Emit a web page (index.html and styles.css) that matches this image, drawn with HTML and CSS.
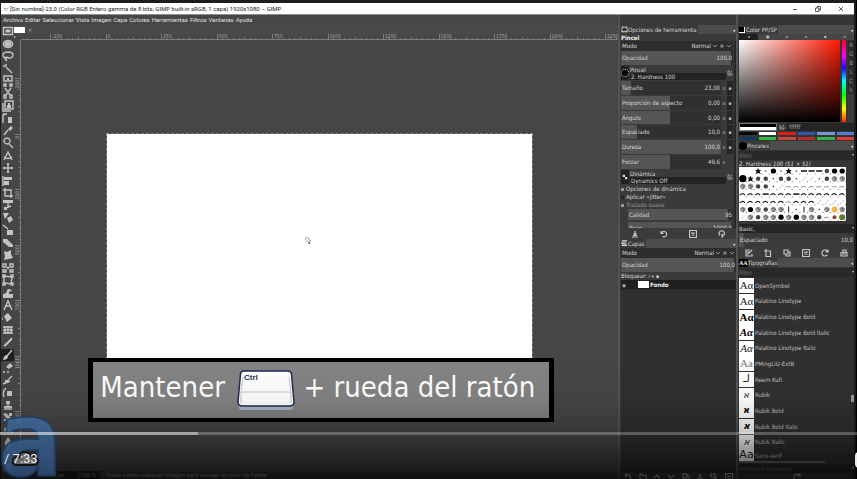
FILE: index.html
```html
<!DOCTYPE html>
<html lang="es">
<head>
<meta charset="utf-8">
<title>[Sin nombre]-23.0 – GIMP</title>
<link rel="stylesheet" href="styles.css">
</head>
<body>
<div class="player">
  <div class="app">
    <header class="titlebar">
      <svg class="wilber" viewBox="0 0 8 6"><path d="M1 1l1 2 2-1 2 1 1-2M2 3l1 2h2l1-1" fill="none" stroke="#999"/></svg>
      <h1>[Sin nombre]-23.0 (Color RGB Entero gamma de 8 bits, GIMP built-in sRGB, 1 capa) 1920x1080 – GIMP</h1>
      <div class="window-buttons">
        <button aria-label="Minimizar"><svg viewBox="0 0 6 6"><path d="M1 3.500h4"/></svg></button>
        <button aria-label="Restaurar"><svg viewBox="0 0 6 6"><path d="M.5 2h3.500v3.500h-3.500zM2 2v-1.500h3.500v3.500h-2"/></svg></button>
        <button aria-label="Cerrar"><svg viewBox="0 0 6 6"><path d="M1 1l4 4M5 1l-4 4"/></svg></button>
      </div>
    </header>
    <div class="work">
      <div class="image-window">
        <nav class="menubar">
          <a href="#">Archivo</a><a href="#">Editar</a><a href="#">Seleccionar</a><a href="#">Vista</a><a href="#">Imagen</a><a href="#">Capa</a><a href="#">Colores</a><a href="#">Herramientas</a><a href="#">Filtros</a><a href="#">Ventanas</a><a href="#">Ayuda</a>
        </nav>
        <div class="editor">
          <div class="toolbox" id="toolbox"></div>
          <div class="document">
            <div class="image-tabs"><span class="thumb"></span><button aria-label="Cerrar imagen">×</button></div>
            <div class="corner">▸</div>
            <svg class="ruler-x" id="ruler-x"></svg>
            <svg class="ruler-y" id="ruler-y"></svg>
            <div class="viewport">
              <div class="canvas">
                <svg class="cursor" viewBox="0 0 8 8"><path d="M1 3h1M3 1v1M3 4.500v1M4.500 3h1M5 5.500v2M4.500 7h2M6 4v1" stroke="#444" fill="none"/></svg>
              </div>
            </div>
            <div class="status">
              <select aria-label="Unidad"><option>px</option></select>
              <select aria-label="Ampliación"><option>100 %</option></select>
              <span>⁄ Pulse sobre cualquier imagen para recoger el color de frente</span>
            </div>
          </div>
        </div>
      </div>

      <aside class="dock dock-options">
        <div class="tabbar"><span class="tab"><svg viewBox="0 0 8 8"><path d="M1 1.500h6v5h-6zM0 6.500h8M2 0v2M6 0v2" fill="none" stroke="#c4c4c4"/></svg>Opciones de herramienta</span><button aria-label="Menú">◂</button></div>
        <h2>Pincel</h2>
        <div class="options">
          <div class="mode"><label for="m1">Modo</label><select id="m1"><option>Normal</option></select><svg class="chev" viewBox="0 0 6 6"><path d="M1 2l2 2 2-2"/></svg><svg class="chev" viewBox="0 0 6 6"><path d="M2 4.500V2h2v2H2"/></svg><svg class="chev" viewBox="0 0 6 6"><path d="M1 2l2 2 2-2"/></svg></div>
          <label class="slider tall" style="--fill:98%"><span>Opacidad</span><input value="100,0"></label>
          <div class="pick"><span class="chip dot"></span><label>Pincel<input value="2. Hardness 100"></label><button aria-label="Editar pincel"><svg viewBox="0 0 6 6"><path d="M1 1v4h4V3M2 4l3-3M1 1h2"/></svg></button></div>
          <div class="sliders">
            <div class="row"><label class="slider" style="--fill:10%"><span>Tamaño</span><input value="23,00"></label><button>o</button><button class="on">▪</button></div>
            <div class="row"><label class="slider" style="--fill:49%"><span>Proporción de aspecto</span><input value="0,00"></label><button>o</button><button class="on">▪</button></div>
            <div class="row"><label class="slider" style="--fill:49%"><span>Ángulo</span><input value="0,00"></label><button>o</button><button class="on">▪</button></div>
            <div class="row"><label class="slider" style="--fill:16%"><span>Espaciado</span><input value="10,0"></label><button>o</button><button class="on">▪</button></div>
            <div class="row"><label class="slider" style="--fill:100%"><span>Dureza</span><input value="100,0"></label><button>o</button><button class="on">▪</button></div>
            <div class="row"><label class="slider" style="--fill:49%"><span>Forzar</span><input value="49,6"></label><button>o</button><button></button></div>
          </div>
          <div class="pick"><span class="chip"><svg class="dyn" viewBox="0 0 8 8"><path d="M1 1h3v3H1zM4 4h3v3H4z"/></svg></span><label>Dinámica<input value="Dynamics Off"></label><button aria-label="Editar dinámica"><svg viewBox="0 0 6 6"><path d="M1 1v4h4V3M2 4l3-3M1 1h2"/></svg></button></div>
          <label class="check"><input type="checkbox" checked>Opciones de dinámica</label>
          <label class="check"><input type="checkbox">Aplicar «jitter»</label>
          <label class="check dim"><input type="checkbox" checked>Trazado suave</label>
          <div class="indent">
            <label class="slider" style="--fill:95%"><span>Calidad</span><input value="95"></label>
            <label class="slider cut" style="--fill:98%"><span>Peso</span><input value="1000,0"></label>
          </div>
        </div>
        <div class="actions">
          <button aria-label="Guardar"><svg viewBox="0 0 8 8"><path d="M1 7h6M4 1v4M2.500 3.500L4 5l1.500-1.500M2 5.500h4"/></svg></button>
          <button aria-label="Restaurar"><svg viewBox="0 0 8 8"><path d="M1 1v2.500h2.500M1.500 3a2.700 2.700 0 1 1 1 3.500"/></svg></button>
          <button aria-label="Borrar"><svg viewBox="0 0 8 8"><path d="M.5.500h7v7h-7zM2.500 2.500l3 3M5.500 2.500l-3 3"/></svg></button>
          <button aria-label="Reiniciar"><svg viewBox="0 0 8 8"><path d="M2 5.500a2.700 2.700 0 1 1 3.500 0M3.500 7.500L5 5.700 3.500 4"/></svg></button>
        </div>
        <div class="tabbar"><span class="tab"><svg viewBox="0 0 8 8"><path d="M1 1h6M0 3.500h6M1 6h6" stroke="#ddd" stroke-width="1.500"/></svg>Capas</span><button aria-label="Menú">◂</button></div>
        <div class="mode"><label for="m2">Modo</label><select id="m2"><option>Normal</option></select><svg class="chev" viewBox="0 0 6 6"><path d="M1 2l2 2 2-2"/></svg><svg class="chev" viewBox="0 0 6 6"><path d="M2 4.500V2h2v2H2"/></svg><svg class="chev" viewBox="0 0 6 6"><path d="M1 2l2 2 2-2"/></svg></div>
        <label class="slider tall" style="--fill:98%"><span>Opacidad</span><input value="100,0"></label>
        <div class="lock">Bloquear: <i>⁄ + ▪</i></div>
        <div class="layers"><div class="layer"><i>◉</i><span class="thumb"></span><b>Fondo</b></div></div>
        <div class="actions bottom">
          <button aria-label="Nueva"><svg viewBox="0 0 8 8"><path d="M1 2h5v6M2 0v4"/></svg></button>
          <button aria-label="Grupo"><svg viewBox="0 0 8 8"><path d="M1 7V1h2l1 1.500h3V7z"/></svg></button>
          <button aria-label="Subir"><svg viewBox="0 0 8 8"><path d="M1 5l3-3 3 3"/></svg></button>
          <button aria-label="Bajar"><svg viewBox="0 0 8 8"><path d="M1 2l3 3 3-3"/></svg></button>
          <button aria-label="Duplicar"><svg viewBox="0 0 8 8"><path d="M1 1h4v4H1zM3 5v2h4V3H5"/></svg></button>
          <button aria-label="Anclar"><svg viewBox="0 0 8 8"><path d="M4 1v6M2 3h4M1.500 5L4 7l2.500-2"/></svg></button>
          <button aria-label="Máscara"><svg viewBox="0 0 8 8"><path d="M1 1h4v3H1zM3 6h4M6 3v5"/></svg></button>
          <button aria-label="Borrar capa"><svg viewBox="0 0 8 8"><path d="M.5.500h7v7h-7zM2.500 2.500l3 3M5.500 2.500l-3 3"/></svg></button>
        </div>
      </aside>

      <aside class="dock dock-color">
        <div class="tabbar"><span class="tab"><span class="fgbg"></span>Color PP/SP</span><button aria-label="Menú">◂</button></div>
        <div class="modes"><button class="on">◂</button><button>▣</button><button>o</button><button>o</button><button>▪</button><button>▫</button></div>
        <div class="picker">
          <div class="field"></div><div class="hue"></div>
          <div class="channels"><button>R</button><button>G</button><button>B</button><button>L</button><button>C</button><button>h</button></div>
        </div>
        <div class="hexrow"><span class="current"></span><svg viewBox="0 0 6 6"><path d="M1 1v4h4V3M2 4l3-3"/></svg><input aria-label="HTML" value="ffffff"></div>
        <div class="palette">
          <i class="p1"></i><i class="p2"></i><i class="p3"></i><i class="p4"></i><i class="p5"></i><i class="p6"></i>
          <i class="p7"></i><i class="p8"></i><i class="p9"></i><i class="p10"></i><i class="p8"></i><i class="p11"></i>
        </div>
        <div class="tabbar"><span class="tab"><span class="ball"></span>Pinceles</span><button aria-label="Menú">◂</button></div>
        <div class="filter"><input aria-label="Filtro de pinceles" placeholder="filtro"><i>▾</i></div>
        <p class="brush-name">2. Hardness 100 (51 × 51)</p>
        <div class="brushes"><svg id="brushes" viewBox="0 0 105 54" preserveAspectRatio="none"></svg></div>
        <div class="basic"><input aria-label="Etiquetas de pincel" value="Basic,"><i>▾</i></div>
        <label class="slider spacing" style="--fill:4%"><span>Espaciado</span><input value="10,0"></label>
        <div class="actions six">
          <button aria-label="Editar"><svg viewBox="0 0 8 8"><path d="M5 1H1v6h6V5M3 5l4-4M2 3h2M2 5h1"/></svg></button>
          <button aria-label="Nuevo"><svg viewBox="0 0 8 8"><path d="M2 2h4.500v5.500H2zM0 2h3M2 0v3"/></svg></button>
          <button aria-label="Duplicar"><svg viewBox="0 0 8 8"><path d="M1 1h4v4H1zM3 5v2h4V3H5"/></svg></button>
          <button aria-label="Borrar"><svg viewBox="0 0 8 8"><path d="M.5.500h7v7h-7zM2.500 2.500l3 3M5.500 2.500l-3 3"/></svg></button>
          <button aria-label="Recargar"><svg viewBox="0 0 8 8"><path d="M6.500 5.500a3 3 0 1 1 0-3M7 .5V3H4.500"/></svg></button>
          <button aria-label="Abrir"><svg viewBox="0 0 8 8"><path d="M1 3.500h6V7H1zM2 5h4M3 3V1h3v2"/></svg></button>
        </div>
        <div class="tabbar"><span class="tab"><span class="aa">AA</span>Tipografías</span><button aria-label="Menú">◂</button></div>
        <div class="filter"><input aria-label="Filtro de tipografías" placeholder="filtro"><i>▾</i></div>
        <div class="fonts">
          <ul>
            <li><b class="serif">Aα</b>OpenSymbol</li>
            <li><b class="serif">Aα</b>Palatino Linotype</li>
            <li><b class="serif bold">Aα</b>Palatino Linotype Bold</li>
            <li><b class="serif bold it">Aα</b>Palatino Linotype Bold Italic</li>
            <li><b class="serif it">Aα</b>Palatino Linotype Italic</li>
            <li><b class="serif grey">Aa</b>PMingLiU-ExtB</li>
            <li><b class="sans big">لـ</b>Reem Kufi</li>
            <li><b class="sans">א</b>Rubik</li>
            <li><b class="sans bold">א</b>Rubik Bold</li>
            <li><b class="sans bold it">א</b>Rubik Bold Italic</li>
            <li><b class="sans it">א</b>Rubik Italic</li>
            <li><b class="sans big">Aa</b>Sans-serif</li>
          </ul>
          <span class="vbar"></span>
        </div>
        <div class="hbar"></div>
        <div class="filter tags"><input aria-label="Etiquetas" placeholder="introducir etiquetas"><i>▾</i></div>
        <div class="actions last"><button aria-label="Recargar tipografías"><svg viewBox="0 0 8 8"><path d="M6.500 5.500a3 3 0 1 1 0-3M7 .5V3H4.500"/></svg></button></div>
      </aside>
    </div>
  </div>

  <div class="caption">
    <span>Mantener</span>
    <svg class="key" viewBox="0 0 58 42"><path d="M2 36q-1 5 3 5h48q4 0 3-5z" fill="#a9b4c8"/><path d="M7 2h44q3 0 3.500 3L57 33q0 4-4 4H5q-4 0-4-4L3.500 5Q4 2 7 2z" fill="#fff" stroke="#1d2c50" stroke-width="1.500"/><path d="M4 34V25q0-2 2-2h46q2 0 2 2v9M4 24l2-16M54 24L52 8" fill="none" stroke="#c4c4c4"/><text x="7" y="11">Ctrl</text></svg>
    <span>+ rueda del ratón</span>
  </div>
  <div class="shade"></div>
  <svg class="logo" viewBox="0 0 56 64">
    <defs><linearGradient id="blue" x1="0" y1="0" x2="0" y2="1"><stop offset="0" stop-color="#4a77b0"/><stop offset="1" stop-color="#27436a"/></linearGradient></defs>
    <text x="-2" y="61">a</text>
  </svg>
  <input class="seek" type="range" aria-label="Progreso" min="0" max="857" value="198">
  <svg class="cloud" viewBox="0 0 28 16"><path d="M5 14a4 4 0 0 1-1-8q2-1 3 0 1-5 6-5 4 0 5 4 3-2 5 2 4 1 3 4-1 3-4 3z" fill="#696969" stroke="#141414" stroke-width="2"/></svg>
  <div class="time">/ 7:33</div>
  <button class="edge" aria-label="Abrir panel"></button>
</div>
<script src="app.js"></script>
</body>
</html>
```
FILE: styles.css
```css
* { box-sizing: border-box; }
body { margin: 0; background: #101010; color: #d8d8d8; font: 6px/8px "DejaVu Sans Condensed", "DejaVu Sans", sans-serif; }
button, input, select { font: inherit; color: inherit; border: 0; background: none; padding: 0; margin: 0; min-width: 0; border-radius: 0; appearance: none; outline: 0; }
h1, h2, p, ul { margin: 0; padding: 0; font: inherit; }
i { font-style: normal; }
svg { display: block; }
.player { position: relative; height: 100vh; overflow: hidden; background: #000; }
.app { height: 100%; display: flex; flex-direction: column; padding: 3px 2px 0 1px; background: #1c1c1c; border-right: 1px solid #000; }
.titlebar { flex: none; height: 12px; display: flex; align-items: center; gap: 1px; padding-left: 2px; background: #fff; color: #222; border-bottom: 1px solid #8a8f89; font: 6px/11px Roboto, sans-serif; }
.wilber { width: 6px; height: 6px; }
.titlebar h1 { flex: 1; white-space: nowrap; }
.window-buttons { display: flex; gap: 17px; padding-right: 10px; }
.window-buttons svg { width: 6px; height: 6px; fill: none; stroke: #333; stroke-width: .8; }
.work { flex: 1; min-height: 0; display: flex; background: #535353; gap: 2px; }
.image-window { flex: 1; min-width: 0; display: flex; flex-direction: column; background: #464646; }
.menubar { height: 10px; display: flex; gap: 2px; padding-left: 2px; font: 6px/10px Roboto, sans-serif; }
.menubar a { color: #e0e0e0; text-decoration: none; }
.editor { flex: 1; min-height: 0; display: flex; }
.toolbox { width: 13px; display: grid; grid-auto-rows: 1fr; padding-bottom: 6px; }
.toolbox button { display: grid; place-items: center; min-height: 0; }
.toolbox button.on { background: #1f1f1f; }
.toolbox svg { width: 12px; height: 12px; fill: #c4c4c4; stroke: #c4c4c4; stroke-width: 1.400; }
.toolbox .line { fill: none; }
.document { flex: 1; min-width: 0; display: grid; grid-template: 9px 6px 1fr 8px / 7px 1fr; overflow: hidden; }
.image-tabs { grid-column: 1 / 3; display: flex; align-items: center; gap: 2px; background: #4a4a4a; }
.image-tabs .thumb { width: 11px; height: 6px; background: #fff; }
.image-tabs button { width: 6px; color: #aaa; line-height: 6px; }
.corner { font-size: 4px; line-height: 6px; }
.ruler-x { width: 100%; height: 6px; }
.ruler-y { width: 7px; height: 100%; }
.ruler-x text, .ruler-y text { font-size: 5px; fill: #aaa; }
.ruler-y text { text-anchor: end; }
.ruler-x path, .ruler-y path { stroke: #7c7c7c; fill: none; }
.viewport { min-height: 0; overflow: hidden; padding: 94px 86px 0 86px; }
.canvas { aspect-ratio: 16 / 9; background: #fff; outline: 1px dashed #85856a; display: grid; place-items: center; padding: 0 24px 28px 0; }
.cursor { width: 8px; height: 8px; }
.status { grid-column: 1 / 3; display: flex; padding-left: 44px; gap: 2px; background: #3a3a3a; color: #a0a0a0; font: 6px/8px Roboto, sans-serif; }
.status select { width: 20px; background: #222; }
.dock { flex: none; width: 13.600%; min-width: 0; background: #333; display: flex; flex-direction: column; overflow: hidden; padding: 10px 0 0 1px; }
.dock-options { background: #3a3a3a; }
.tabbar { flex: none; height: 9px; display: flex; justify-content: space-between; background: #4d4d4d; color: #d8d8d8; }
.tab { display: flex; align-items: center; background: #3a3a3a; padding-right: 1px; }
.tab svg { width: 7px; height: 7px; }
.tabbar button { width: 4px; font-size: 5px; }
.dock h2 { height: 7px; line-height: 7px; font-weight: bold; color: #eee; background: #3a3a3a; }
.options { padding-right: 1px; border-right: 2px solid #262626; height: 187px; overflow: hidden; display: flex; flex-direction: column; }
.mode { flex: none; height: 10px; display: flex; gap: 1px; align-items: center; padding: 0 1px; background: #2d2d2d; }
.mode select { flex: 1; text-align-last: right; }
.chev { width: 6px; height: 6px; fill: none; stroke: #aaa; stroke-width: .8; }
.slider { flex: 1; display: flex; align-items: center; justify-content: space-between; min-width: 0; padding: 0 1px; background: linear-gradient(#555, #555) left / var(--fill) 100% no-repeat #303030; color: #d8d8d8; white-space: nowrap; }
.slider input { width: 24px; text-align: right; }
.tall { flex: none; height: 14px; }
.pick { flex: none; height: 16px; display: grid; grid-template-columns: 8px 1fr 6px; align-items: center; gap: 1px; }
.pick label { display: block; line-height: 7px; }
.pick label input { display: block; width: 100%; height: 7px; background: #222; padding-left: 1px; }
.chip { height: 14px; display: grid; place-items: center; background: #222; }
.dot::before { content: ""; width: 6px; height: 6px; border-radius: 50%; background: #000; border: 1px dotted #ddd; }
.pick svg, .hexrow svg { width: 6px; height: 6px; fill: none; stroke: #bbb; stroke-width: .8; }
.pick .dyn { fill: #ddd; stroke: none; }
.sliders { flex: none; height: 88px; display: grid; grid-auto-rows: 1fr; row-gap: 1px; }
.row { display: flex; min-height: 0; }
.row > button { width: 6px; font-size: 5px; color: #bbb; }
.row > .on { background: #252525; }
.check { flex: none; height: 8px; display: flex; align-items: center; gap: 2px; }
.check input { width: 3px; height: 3px; background: #222; }
.check input:checked { background: #999; }
.dim { color: #959595; }
.indent { flex: none; display: grid; row-gap: 2px; padding-left: 7px; }
.indent .slider { height: 11px; }
.actions { flex: none; height: 11px; display: grid; grid-auto-flow: column; grid-auto-columns: 1fr; place-items: center; background: #3c3c3c; }
.actions svg { width: 8px; height: 8px; fill: none; stroke: #c6c6c6; stroke-width: 1.200; }
.bottom, .last { height: 6px; align-items: start; overflow: hidden; }
.lock { height: 8px; }
.lock i { font-size: 5px; }
.layers { flex: 1; background: #303030; }
.layer { height: 9px; display: flex; align-items: center; gap: 1px; background: #1f1f1f; color: #eee; padding-left: 1px; }
.layer i { width: 15px; font-size: 5px; color: #bbb; }
.layer .thumb { width: 11px; height: 7px; background: #fff; }
.dock-color { background: #353535; }
.fgbg { width: 6px; height: 6px; margin-right: 1px; background: #000; border-right: 1px solid #fff; border-bottom: 1px solid #fff; }
.modes { height: 6px; display: grid; grid-template-columns: repeat(6, 1fr); background: #454545; }
.modes button { font-size: 4px; line-height: 6px; }
.modes .on { background: #1f1f1f; }
.picker { flex: none; height: 82px; display: flex; gap: 2px; }
.field { flex: 1; background: linear-gradient(to top, #000, transparent), linear-gradient(to right, #fff, #ff1800); }
.hue { width: 4px; background: linear-gradient(#ff0020, #f0f 20%, #20f 34%, #0ff 50%, #0f0 67%, #ff0 84%, #f20); }
.channels { width: 6px; display: grid; grid-template-rows: repeat(6, 9px); background: #3c3c3c; color: #999; }
.channels button { line-height: 9px; background: #2b2b2b; }
.hexrow { height: 9px; display: flex; align-items: center; gap: 2px; }
.current { width: 38px; height: 8px; background: linear-gradient(#000 50%, #fff 50%); border: 1px solid #777; }
.hexrow input { flex: 1; width: 10px; height: 8px; background: #252525; color: #aaa; padding-left: 2px; }
.palette { flex: none; height: 10px; display: grid; grid-template-columns: repeat(6, 1fr); gap: 2px; padding: 1px 0; }
.p1 { background: #0a0a0a; } .p2 { background: #fff; } .p3 { background: #d62015; } .p4 { background: #2b57ad; } .p5 { background: #7596d6; } .p6 { background: #527cce; }
.p7 { background: #123a61; } .p8 { background: #2eb845; } .p9 { background: #c5473b; } .p10 { background: #b52e25; } .p11 { background: #e83a31; }
.ball { width: 8px; height: 8px; border-radius: 50%; background: #000; }
.filter { flex: none; height: 9px; display: flex; margin: 1px 0 0; background: #292929; }
.filter input { flex: 1; font-style: italic; }
.filter input::placeholder { color: #777; opacity: 1; }
.filter i, .basic i { font-size: 4px; }
.brush-name { height: 7px; line-height: 7px; font-style: italic; white-space: nowrap; color: #ddd; }
.brushes { flex: none; height: 57px; padding-right: 8px; }
.brushes svg { width: 100%; height: 54px; background: #fff; }
.basic { flex: none; height: 9px; display: flex; background: #252525; }
.basic input { flex: 1; }
.spacing { flex: none; height: 14px; background-color: #3a3a3a; }
.aa { font: bold 6px/8px "Liberation Serif", serif; background: #000; color: #fff; }
.fonts { flex: 1; min-height: 0; display: flex; background: #303030; padding-top: 1px; }
.fonts ul { flex: 1; min-width: 0; display: grid; grid-template-rows: repeat(11, 1fr) 11px; list-style: none; color: #c0c0c0; overflow: hidden; }
.fonts li { display: flex; align-items: center; gap: 1px; min-height: 0; overflow: hidden; white-space: nowrap; }
.fonts b { width: 15px; height: 15px; flex: none; background: #fff; color: #222; text-align: center; font: 11px/14px "Liberation Serif", serif; overflow: hidden; }
.fonts .sans { font-family: "DejaVu Sans", sans-serif; font-size: 9px; }
.fonts .big { font-size: 11px; }
.fonts .bold { font-weight: bold; color: #000; }
.fonts .it { font-style: italic; }
.fonts .grey { color: #777; }
.vbar { width: 3px; height: 7px; margin-top: 117px; background: #999; }
.hbar { flex: none; height: 2px; margin-right: 29px; background: #666; }
.caption { position: absolute; left: 10.300%; top: 358px; width: 466px; height: 64px; display: flex; align-items: center; padding: 0 14px 6px 7px; justify-content: space-between; background: #838383; border: 5px solid #000; border-width: 4px 5px; color: #fff; font-size: 29px; line-height: 40px; white-space: nowrap; }
.key { width: 58px; height: 42px; margin: 6px 0 0 4px; }
.key text { font: bold 8px "Liberation Sans", sans-serif; fill: #25304a; }
.logo { position: absolute; left: 0; bottom: 0; width: 56px; height: 64px; opacity: .88; }
.logo text { font: bold 106px "DejaVu Sans Condensed", sans-serif; fill: url(#blue); stroke: #233f63; stroke-width: 2; }
.shade { position: absolute; left: 0; right: 0; bottom: 0; height: 120px; background: linear-gradient(transparent, rgba(0,0,0,.04) 33%, rgba(0,0,0,.18) 58%, rgba(0,0,0,.38) 74%, rgba(0,0,0,.7)); pointer-events: none; }
.seek { position: absolute; left: 0; bottom: 44px; width: 100%; height: 3px; background: linear-gradient(to right, rgba(255,255,255,.55) 23.100%, rgba(255,255,255,.25) 23.100%); }
.seek::-webkit-slider-thumb { appearance: none; width: 0; }
.cloud { position: absolute; left: 12px; bottom: 12px; width: 28px; height: 16px; }
.time { position: absolute; left: 4px; bottom: 12px; color: #eee; font: 13px/16px Roboto, sans-serif; }
.edge { position: absolute; right: -8px; bottom: 11px; width: 10px; height: 16px; border-radius: 4px; background: #eee; }
```
FILE: app.js
```js
const toolIcons = [
  'M1.5 2.500h9v7h-9z|M3.500 4.500h5v3h-5z',
  'M6 2.500a4.500 3.500 0 1 0 .1 0z|M6 3.500a3.500 2.500 0 1 0 .1 0z',
  'M5 8q-4 0-4-3t5-3 5 3-4 3q-4-2-4 1l2 2|',
  'M4 4l6 6M1 3h3M4 1v2|',
  'M2 1h8v5H2zM2 9h2v2H2zM8 9h2v2H8z|M5 3h2v2H5z',
  'M3 1l5 7M9 1L4 8M2 8h2v3H2zM8 8h2v3H8z|',
  'M3 1h8v8H3zM1 3v8h8|M5 5h4v3H5zM6 3h2v2H6z',
  'M1 11V4q0-2 4-2M1 2h2|M6 5h4v6H6z',
  'M2 10l4-5|M6 4l3-3 2 2-3 3z',
  'M5 1a3 3 0 1 0 .1 0M7 7l4 4|',
  'M2 10L6 2l4 8M2 7q4 3 8 0|',
  'M6 1v10M1 6h10M5 2h2M5 10h2M2 5v2M10 5v2|',
  'M1 1v10|M2 2h8v3H2zM2 6h5v4H2z',
  'M1 3h8v8M3 1v8h8|',
  'M6 3v5M4 9l5-2|M1 1h10v3H1zM2 8h3v3H2z',
  '|M1 1h6L3 7zM5 6l4-2 2 4-4 3z',
  'M1 1l5 4|M5 6h6v5H5z',
  '|M1 2h4l6 6v2H7L1 5z',
  '|M2 2l3 1 4-2v4l2 4-4 1-5 1 1-4z',
  'M1 2h3v3H1zM8 2h3v3H8zM1 8h3v2H1zM8 8h3v2H8z|M5 5h2v2H5z',
  'M2 2l8 1-1 7-7-1zM1 1h2v2H1zM9 1h2v2H9zM1 9h2v2H1zM9 9h2v2H9z|',
  '|M1 11V7q4 0 4-4 4-3 5 2-2-2-3 0v2h4v4z',
  'M2 11L6 2l4 9M4 7h4|',
  '|M2 5l4-3 4 5-5 4zM1 5v4H0z',
  'M1 3h10M1 6h10M1 9h10M3 2v8M6 2v8M9 2v8|',
  'M2 10l8-8M3 10l7-7|',
  'M5 7l5-6|M1 11q1-5 4-5l1 2q-1 3-5 3z',
  'M1 11h2M5 11h2|M4 6l4-4 3 3-4 3z',
  'M3 9l7-7M1 10l7-3|M3 6h3v3H3z',
  'M2 11Q0 6 4 2|M5 5h5v5H5z',
  'M2 10h8M6 3v5|M4 2h4v3H4zM2 7h8v2H2z',
  '|M1 3l3-1 7 7-3 2zM7 2h3v3H7zM2 8h3v2H2z',
  '|M2 6l4-4 1 5-4 2zM7 7h4v3H7z',
  '|M6 1q4 5 3 8-3 3-6 0-1-3 3-8z',
  'M2 10l8-7|M2 7h3v3H2z',
  'M2 10l3-3|M5 3a3 3 0 1 1 0 5z'
];
document.getElementById('toolbox').innerHTML = toolIcons.map((d, i) => {
  const [line, fill] = d.split('|');
  return `<button aria-label="Herramienta ${i + 1}" class="${i === 26 ? 'on' : ''}"><svg viewBox="0 0 12 12"><path class="line" d="${line}"/><path stroke="none" d="${fill}"/></svg></button>`;
}).join('');

function ruler(id, vertical, start, first, count) {
  const step = 55.5;
  let d = '';
  let labels = '';
  for (let i = 0; i < count; i++) {
    const base = start + i * step;
    for (let k = 0; k < 10; k++) {
      const p = Math.round(base + k * step / 10) + 0.5;
      const len = k === 0 ? 6 : k === 5 ? 3 : 2;
      d += vertical ? `M${7 - len} ${p}h${len}` : `M${p} ${6 - len}v${len}`;
    }
    const t = first + i * 250;
    labels += vertical
      ? `<text transform="translate(5 ${base + 2}) rotate(-90)">${t}</text>`
      : `<text x="${base + 2}" y="4">${t}</text>`;
  }
  d += vertical ? 'M6.5 0v500' : 'M0 5.500h900';
  document.getElementById(id).innerHTML = `<path d="${d}"/>${labels}`;
}
ruler('ruler-x', false, 29, -250, 11);
ruler('ruler-y', true, 38, -250, 8);

const rows = ['  s.O.s.---oOO', 'O*oo.oo.::.o##', '##oo.:~~~~~~~~', '===-===-======', '======~===::::', '#O#o##|.|#.#y#', ':#o##O#O##o~bg'];
let marks = '';
rows.forEach((row, r) => [...row].forEach((c, k) => {
  const x = k * 7.5 + 3.75;
  const y = r * 7.7 + 4;
  const circle = (size, color) => `<circle cx="${x}" cy="${y}" r="${size}" fill="${color}"/>`;
  if (c === 'O') marks += circle(r === 1 ? 3.6 : 2.6, '#000');
  else if (c === 'o') marks += circle(2.2, '#444');
  else if (c === '.') marks += circle(0.8, '#333');
  else if (c === 'y') marks += circle(3, '#f2b84b');
  else if (c === 'g') marks += circle(3, '#5c7d32');
  else if (c === 'b') marks += circle(2, '#8d4a3a');
  else if (c === '-') marks += `<path d="M${x - 3} ${y}h6" stroke="#111" stroke-width="1.500"/>`;
  else if (c === '|') marks += `<path d="M${x} ${y - 3}v6" stroke="#222"/>`;
  else if (c === '~') marks += `<path d="M${x - 3} ${y + 1}q3-2 5 0" stroke="#999" fill="none"/>`;
  else if (c === '=') marks += `<path d="M${x - 3} ${y + 1}q3-3 5 0" stroke="#222" fill="none" stroke-width="1.200"/>`;
  else if (c === ':') marks += `<path d="M${x - 2} ${y + 2}l4-4" stroke="#aaa" stroke-dasharray="1"/>`;
  else if (c === '#') marks += circle(2.8, '#aaa') + `<path d="M${x - 2} ${y}l2-2 1 3 1-2M${x - 1} ${y + 2}h2" stroke="#444" fill="none" stroke-width=".7"/>`;
  else if (c === 's' || c === '*') marks += `<path d="M${x} ${y - 3}l1 2h2l-1.500 1.500 1 2.500-2.500-1-2.500 1 1-2.500L${x - 3} ${y - 1}h2z" fill="#111"/>`;
  if (c !== ' ') marks += `<path d="M${x + 3} ${y + 3}h1" stroke="#777"/>`;
}));
document.getElementById('brushes').innerHTML = marks;
```
